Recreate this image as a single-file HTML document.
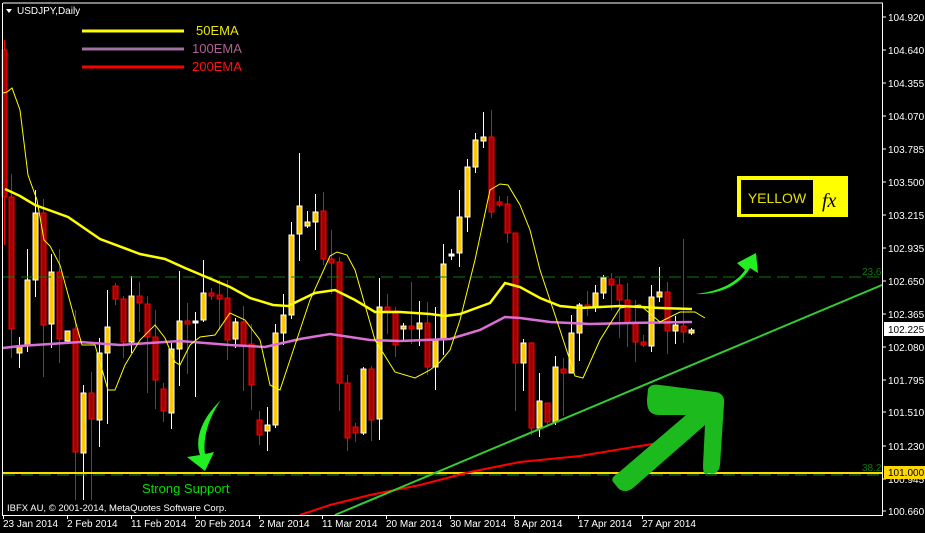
<!DOCTYPE html>
<html><head><meta charset="utf-8"><style>
html,body{margin:0;padding:0;background:#000;width:925px;height:533px;overflow:hidden}
svg{display:block;font-family:"Liberation Sans",sans-serif}
</style></head><body>
<svg id="s" width="925" height="533" viewBox="0 0 925 533" xmlns="http://www.w3.org/2000/svg">
<rect width="925" height="533" fill="#000"/>
<g id="cand"></g>
<!-- fib lines -->
<line x1="3" y1="277" x2="882" y2="277" stroke="#0a7a0a" stroke-width="1" stroke-dasharray="12,6"/>
<text x="862" y="275" fill="#0a7a0a" font-size="10">23.6</text>
<line x1="3" y1="473" x2="882" y2="473" stroke="#ffd800" stroke-width="2"/>
<line x1="3" y1="475" x2="882" y2="475" stroke="#0a8a0a" stroke-width="1" stroke-dasharray="12,6"/>
<text x="862" y="471" fill="#0a7a0a" font-size="10">38.2</text>
<!-- EMAs -->
<polyline fill="none" stroke="#ff0000" stroke-width="2" points="300,515 330,505 370,495 420,485 470,472 520,462 580,456 640,446 690,438"/>
<polyline fill="none" stroke="#da70d6" stroke-width="2.5" points="3,348 20,346 50,344 80,342 120,345 180,341 230,345 265,347 300,339 330,334 370,340 400,341 450,339 480,330 505,317 520,318 550,322 590,324 630,323 692,322"/>
<polyline fill="none" stroke="#ffff00" stroke-width="2.5" points="5,189 20,196 35,205 68,217 100,239 140,254 165,259 185,268 230,287 250,298 273,305 288,306 315,293 335,290 355,300 375,312 400,312 430,314 445,316 460,314 490,303 505,283 520,287 540,298 560,306 580,308 620,306 660,308 692,309"/>
<polyline fill="none" stroke="#ffff00" stroke-width="1" points="3,93 7,92 12,88 20,110 28,175 37,200 44,240 50,246 60,265 75,320 82,345 95,345 108,390 115,390 125,365 140,340 155,325 165,338 175,362 180,365 190,345 200,337 215,335 230,313 245,320 260,340 270,385 280,390 290,360 310,300 330,256 337,252 347,255 355,270 375,340 395,372 415,378 430,370 440,362 450,350 460,320 475,260 490,190 500,184 508,185 520,205 530,230 540,270 560,330 575,376 583,378 600,340 620,308 640,305 660,322 680,312 695,312 705,318"/>
<!-- trend line -->
<line x1="335" y1="515" x2="882" y2="285" stroke="#33cc33" stroke-width="2"/>
<!-- frame -->
<line x1="3" y1="3" x2="883" y2="3" stroke="#fff"/>
<line x1="2.5" y1="3" x2="2.5" y2="515" stroke="#fff"/>
<line x1="882.5" y1="3" x2="882.5" y2="515" stroke="#fff"/>
<line x1="2" y1="515.5" x2="883" y2="515.5" stroke="#fff"/>
<g id="ax" fill="#fff" font-size="10"></g>
<!-- title -->
<polygon points="6,9 12,9 9,13" fill="#fff"/>
<text x="17" y="14" fill="#fff" font-size="10">USDJPY,Daily</text>
<!-- legend -->
<line x1="82" y1="31" x2="184" y2="31" stroke="#ffff00" stroke-width="3"/>
<text x="196" y="35" fill="#e8e800" font-size="13">50EMA</text>
<line x1="82" y1="49" x2="184" y2="49" stroke="#a070a0" stroke-width="3"/>
<text x="192" y="53" fill="#b06090" font-size="13">100EMA</text>
<line x1="82" y1="67" x2="184" y2="67" stroke="#ff0000" stroke-width="3"/>
<text x="192" y="71" fill="#ff1010" font-size="13">200EMA</text>
<text x="142" y="493" fill="#00dd00" font-size="13">Strong Support</text>
<text x="7" y="511" fill="#fff" font-size="9.5">IBFX AU, © 2001-2014, MetaQuotes Software Corp.</text>
<!-- arrows -->
<path d="M221,400 C200,420 195,440 200,455 L187,457 L205,471 L214,452 L205,454 C203,440 207,420 221,400 Z" fill="#22ee22"/>
<path d="M695,294 C715,292 735,285 745,270 L737,263 L756,253 L758,273 L750,268 C740,285 720,295 695,294 Z" fill="#22ee22"/>
<path d="M617,474 L686,415 L660,415 C650,415 647,410 647,400 L648,389 C650,385 654,384 660,385 L715,392 C722,393 725,397 724,404 L720,465 C719,472 715,475 709,473 L706,474 C704,474 703,472 703,465 L705,425 L633,488 C628,492 622,492 618,488 L614,483 C611,480 612,477 617,474 Z" fill="#1cba1c"/>
<!-- logo -->
<rect x="737" y="176" width="111" height="41" fill="#ffff00"/>
<rect x="741" y="180" width="72" height="34" fill="#000"/>
<text x="777" y="203" fill="#e8e000" font-size="14" text-anchor="middle">YELLOW</text>
<text x="822" y="207" fill="#000" font-size="20" font-style="italic" font-family="Liberation Serif,serif">fx</text>
</svg>
<script>
var C=[[4,0,50,197,40,245],[11,0,197,329,174,358],[19,1,346,353,337,368],[27,1,280,346,249,352],[35,1,213,280,190,297],[43,0,213,325,199,377],[51,1,272,324,254,348],[59,0,272,339,249,363],[67,1,331,341,331,341],[75,0,329,452,310,500],[83,1,393,453,385,500],[91,0,393,419,372,500],[99,1,353,420,338,447],[107,1,327,353,290,424],[115,0,286,299,283,305],[123,0,299,342,296,358],[131,1,296,342,276,353],[139,0,296,303,282,332],[147,0,304,337,296,393],[155,0,337,380,310,409],[163,0,389,411,383,422],[171,1,349,413,343,429],[179,1,321,349,271,386],[187,0,321,324,303,374],[195,2,321,322,312,397],[203,1,293,320,260,322],[211,0,293,296,288,300],[219,0,295,299,280,330],[227,0,298,340,280,360],[235,1,322,339,318,348],[243,0,322,345,306,391],[251,0,344,385,324,410],[259,0,420,435,411,445],[267,1,425,431,407,451],[275,1,333,425,324,428],[283,1,315,333,294,345],[291,1,235,315,222,319],[299,1,206,234,153,261],[307,1,222,226,211,228],[315,1,212,222,194,250],[323,0,211,259,192,265],[331,0,259,263,230,294],[339,0,262,383,257,411],[347,0,383,438,375,451],[355,0,427,433,423,442],[363,1,369,433,367,435],[371,0,369,420,366,441],[379,1,307,419,278,440],[387,0,307,311,294,334],[395,0,311,345,307,357],[403,1,326,329,323,341],[411,0,326,329,282,344],[419,1,323,329,301,346],[427,0,323,367,302,375],[435,1,339,367,307,390],[443,1,264,339,244,355],[451,2,254,255,249,260],[459,1,217,253,190,267],[467,1,167,217,159,232],[475,1,140,167,133,173],[483,1,137,141,112,148],[491,0,137,212,110,218],[499,0,202,205,196,207],[507,0,204,233,196,243],[515,0,233,363,233,411],[523,1,343,363,339,391],[531,0,343,428,342,435],[539,1,401,428,373,437],[547,0,403,422,403,425],[555,1,367,422,356,425],[563,0,369,373,358,416],[571,1,333,373,315,373],[579,1,305,333,303,361],[587,0,305,308,291,316],[595,1,293,307,285,312],[603,1,278,293,275,299],[611,0,279,285,273,310],[619,0,285,300,278,338],[627,0,300,323,283,347],[635,0,322,342,300,362],[643,0,342,345,335,347],[651,1,297,346,285,352],[659,1,292,297,267,302],[667,0,292,331,282,354],[675,1,325,331,316,344],[683,0,326,332,239,343],[691,1,330,333,328,335]];
var h='';C.forEach(function(c){var x=c[0],t=c[1];var wc=t==0?'#ff0000':'#ffffff';var fill=t==0?'#a80000':(t==1?'#ffc800':'#fff');var bc=t==0?'#ff0000':'#ffffff';
h+='<line x1="'+(x+.5)+'" y1="'+c[4]+'" x2="'+(x+.5)+'" y2="'+c[5]+'" stroke="'+wc+'"/>';
var bh=Math.max(c[3]-c[2],2);h+='<rect x="'+(x-2)+'" y="'+c[2]+'" width="5" height="'+bh+'" fill="'+fill+'" stroke="'+bc+'" stroke-width="1"/>';});
document.getElementById('cand').innerHTML=h;
var L=[["104.920",17],["104.640",50],["104.355",83],["104.070",116],["103.785",149],["103.500",182],["103.215",215],["102.935",248],["102.650",281],["102.365",314],["102.080",347],["101.795",380],["101.510",412],["101.230",446],["100.945",479],["100.660",511]];
var a='';L.forEach(function(l){a+='<line x1="882" y1="'+l[1]+'" x2="886" y2="'+l[1]+'" stroke="#fff"/><text x="888" y="'+(l[1]+4)+'">'+l[0]+'</text>';});
a+='<rect x="884" y="322" width="41" height="14" fill="#fff"/><text x="888" y="333" fill="#000">102.225</text>';
a+='<rect x="884" y="466" width="41" height="13" fill="#ffd800"/><text x="888" y="476" fill="#000">101.000</text>';
var D=[["23 Jan 2014",3],["2 Feb 2014",67],["11 Feb 2014",131],["20 Feb 2014",195],["2 Mar 2014",259],["11 Mar 2014",322],["20 Mar 2014",386],["30 Mar 2014",450],["8 Apr 2014",514],["17 Apr 2014",578],["27 Apr 2014",642]];
D.forEach(function(d){a+='<line x1="'+(d[1]+.5)+'" y1="515" x2="'+(d[1]+.5)+'" y2="519" stroke="#fff"/><text x="'+d[1]+'" y="527">'+d[0]+'</text>';});
document.getElementById('ax').innerHTML=a;
</script>
</body></html>
